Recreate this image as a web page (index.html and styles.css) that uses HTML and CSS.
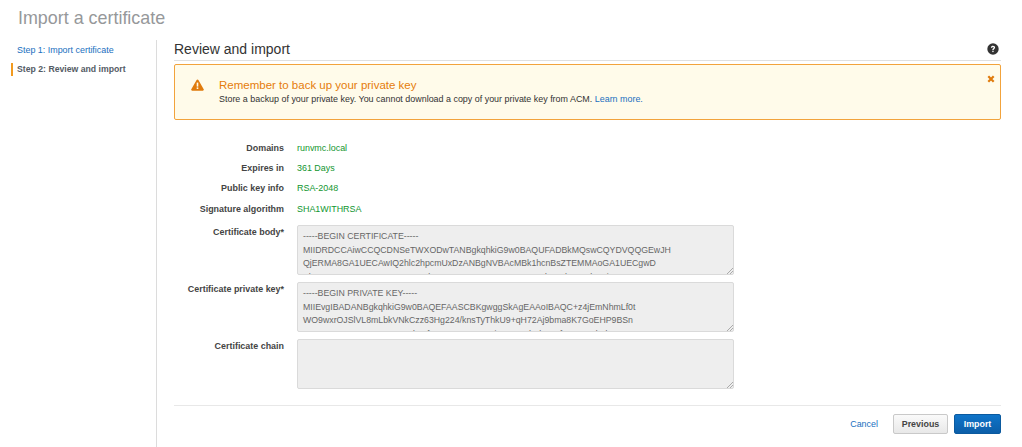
FILE: index.html
```html
<!DOCTYPE html>
<html lang="en">
<head>
<meta charset="utf-8">
<title>Import a certificate</title>
<link rel="stylesheet" href="styles.css">
</head>
<body>
<h1 class="page-title">Import a certificate</h1>
<div class="layout">
  <nav class="sidebar">
    <a class="step step-link" href="#">Step 1: Import certificate</a>
    <div class="step step-current">Step 2: Review and import</div>
  </nav>
  <main class="main">
    <header class="heading">
      <h2 class="heading-text">Review and import</h2>
      <svg class="help" viewBox="0 0 12 12" width="12" height="12" aria-hidden="true">
        <circle cx="6" cy="6" r="5.7" fill="#333"/>
        <path d="M3.9 4.7c0-1.3 1-1.9 2.1-1.9 1.2 0 2.1.7 2.1 1.7 0 1.5-1.5 1.4-1.5 2.6H5.3c0-1.7 1.4-1.6 1.4-2.5 0-.4-.3-.7-.7-.7-.5 0-.8.3-.8.8z" fill="#fff"/>
        <rect x="5.3" y="7.7" width="1.3" height="1.4" fill="#fff"/>
      </svg>
    </header>
    <section class="alert">
      <svg class="alert-icon" viewBox="0 0 13 12" width="13" height="12" aria-hidden="true">
        <path d="M6.5.4c.4 0 .7.2.9.5l5.3 9.4c.4.7 0 1.4-.8 1.4H1.1c-.8 0-1.2-.7-.8-1.4L5.6.9c.2-.3.5-.5.9-.5z" fill="#e07b0d"/>
        <rect x="5.7" y="3.6" width="1.6" height="4" fill="#fffbea"/>
        <rect x="5.7" y="8.4" width="1.6" height="1.6" fill="#fffbea"/>
      </svg>
      <div class="alert-body">
        <div class="alert-title">Remember to back up your private key</div>
        <div class="alert-text">Store a backup of your private key. You cannot download a copy of your private key from ACM. <a href="#">Learn more.</a></div>
      </div>
      <svg class="alert-close" viewBox="0 0 8 8" width="8" height="8" aria-hidden="true">
        <path d="M1.3 1.3l5.4 5.4M6.7 1.3L1.3 6.7" stroke="#e07b0d" stroke-width="2.2" fill="none"/>
      </svg>
    </section>
    <div class="details">
      <div class="row"><div class="label">Domains</div><div class="value">runvmc.local</div></div>
      <div class="row"><div class="label">Expires in</div><div class="value">361 Days</div></div>
      <div class="row"><div class="label">Public key info</div><div class="value">RSA-2048</div></div>
      <div class="row"><div class="label">Signature algorithm</div><div class="value">SHA1WITHRSA</div></div>
    </div>
    <div class="fields">
      <div class="field">
        <label class="field-label" for="body">Certificate body*</label>
        <textarea class="area" id="body" readonly wrap="off">-----BEGIN CERTIFICATE-----
MIIDRDCCAiwCCQCDNSeTWXODwTANBgkqhkiG9w0BAQUFADBkMQswCQYDVQQGEwJH
QjERMA8GA1UECAwIQ2hlc2hpcmUxDzANBgNVBAcMBk1hcnBsZTEMMAoGA1UECgwD
Vk1DMQ0wCwYDVQQLDARVTkVMMR4wHAYDVQQDDBVydW52bWMubG9jYWxCQ0xTM1</textarea>
      </div>
      <div class="field">
        <label class="field-label" for="key">Certificate private key*</label>
        <textarea class="area" id="key" readonly wrap="off">-----BEGIN PRIVATE KEY-----
MIIEvgIBADANBgkqhkiG9w0BAQEFAASCBKgwggSkAgEAAoIBAQC+z4jEmNhmLf0t
WO9wxrOJSlVL8mLbkVNkCzz63Hg224/knsTyThkU9+qH72Aj9bma8K7GoEHP9BSn
QoGom4OQVNUvGFLO2wdM5fZ4XnTHtZ4L6Z3iYUvSvAhFkDg2fM16Nmd3d</textarea>
      </div>
      <div class="field">
        <label class="field-label" for="chain">Certificate chain</label>
        <textarea class="area" id="chain" readonly wrap="off"></textarea>
      </div>
    </div>
    <footer class="actions">
      <a class="cancel" href="#">Cancel</a>
      <button class="btn btn-secondary" type="button">Previous</button>
      <button class="btn btn-primary" type="button">Import</button>
    </footer>
  </main>
</div>
</body>
</html>
```
FILE: styles.css
```css
* { box-sizing: border-box; }
html, body { margin: 0; height: 100%; overflow: hidden; }
body {
  background: #fff;
  color: #444;
  font-family: "Liberation Sans", Arial, sans-serif;
  font-size: 8.93px;
}
a { color: #1a6fc0; text-decoration: none; }
.page-title {
  margin: 0;
  padding: 8px 0 0 18px;
  height: 40px;
  font-size: 17.9px;
  line-height: 21px;
  font-weight: 400;
  color: #96989a;
}
.layout { display: flex; height: 407px; }
.sidebar {
  width: 157px;
  flex: none;
  border-right: 1px solid #dcdcdc;
  padding-top: 3.5px;
}
.step { display: block; height: 19px; line-height: 13px; }
.step-link { padding-left: 17px; }
.step-current {
  margin-left: 11px;
  padding-left: 4px;
  border-left: 2px solid #f29a1f;
  height: 13px;
  font-size: 8.7px;
  font-weight: 700;
  color: #545b64;
}
.main { flex: none; width: 827px; margin-left: 17px; }
.heading {
  display: flex;
  justify-content: space-between;
  align-items: center;
  height: 21px;
  padding-bottom: 2px;
  border-bottom: 1px solid #e0e0e0;
}
.heading-text {
  margin: 0;
  font-size: 14px;
  line-height: 18px;
  font-weight: 400;
  color: #333;
}
.help { margin-right: 2px; margin-top: -1px; }
.alert {
  display: flex;
  margin-top: 3px;
  height: 56px;
  background: #fffbea;
  border: 1px solid #f2a33c;
  border-radius: 2px;
  padding: 13px 5px 0 16px;
}
.alert-icon { flex: none; margin: 1px 15px 0 0; }
.alert-body { flex: 1; }
.alert-title { font-size: 11.5px; line-height: 14px; color: #e57c0b; }
.alert-text { margin-top: 1px; line-height: 13px; color: #333; }
.alert-close { flex: none; margin-top: -3.5px; }
.details { margin-top: 17.5px; }
.row { display: flex; height: 20.3px; align-items: center; }
.label {
  width: 110px;
  flex: none;
  text-align: right;
  font-weight: 700;
  color: #444;
}
.value { margin-left: 13px; color: #12962f; }
.fields { margin-top: 6.5px; display: flex; flex-direction: column; gap: 7px; }
.field { display: flex; align-items: flex-start; }
.field-label {
  width: 110px;
  flex: none;
  text-align: right;
  font-weight: 700;
  line-height: 12px;
  padding-top: 1px;
  color: #444;
}
.area {
  display: block;
  margin: 0 0 0 13px;
  width: 437px;
  height: 50px;
  padding: 4px 5px 0;
  background: #eee;
  border: 1px solid #dadada;
  border-radius: 2px;
  font-family: "Liberation Sans", Arial, sans-serif;
  font-size: 8.75px;
  line-height: 13.5px;
  color: #666;
  outline: none;
  overflow: hidden;
  resize: vertical;
}
.area::-webkit-resizer {
  background: linear-gradient(135deg, transparent 0 52%, #aaa 52% 60%, transparent 60% 74%, #aaa 74% 82%, transparent 82%) no-repeat right 0 bottom 0 / 7px 7px;
}
.actions {
  display: flex;
  justify-content: flex-end;
  align-items: center;
  margin-top: 16px;
  padding-top: 8px;
  border-top: 1px solid #e8e8e8;
}
.cancel { margin-right: 15px; }
.btn {
  height: 20px;
  padding: 0;
  border-radius: 2px;
  font-family: "Liberation Sans", Arial, sans-serif;
  font-size: 8.9px;
  font-weight: 700;
}
.btn-secondary {
  width: 55px;
  margin-right: 6px;
  background: linear-gradient(#fafafa, #e8e8e8);
  border: 1px solid #c9c9c9;
  color: #444;
}
.btn-primary {
  width: 47px;
  background: linear-gradient(#0f74c9, #0c5ea8);
  border: 1px solid #0b5a9f;
  color: #fff;
}
```
